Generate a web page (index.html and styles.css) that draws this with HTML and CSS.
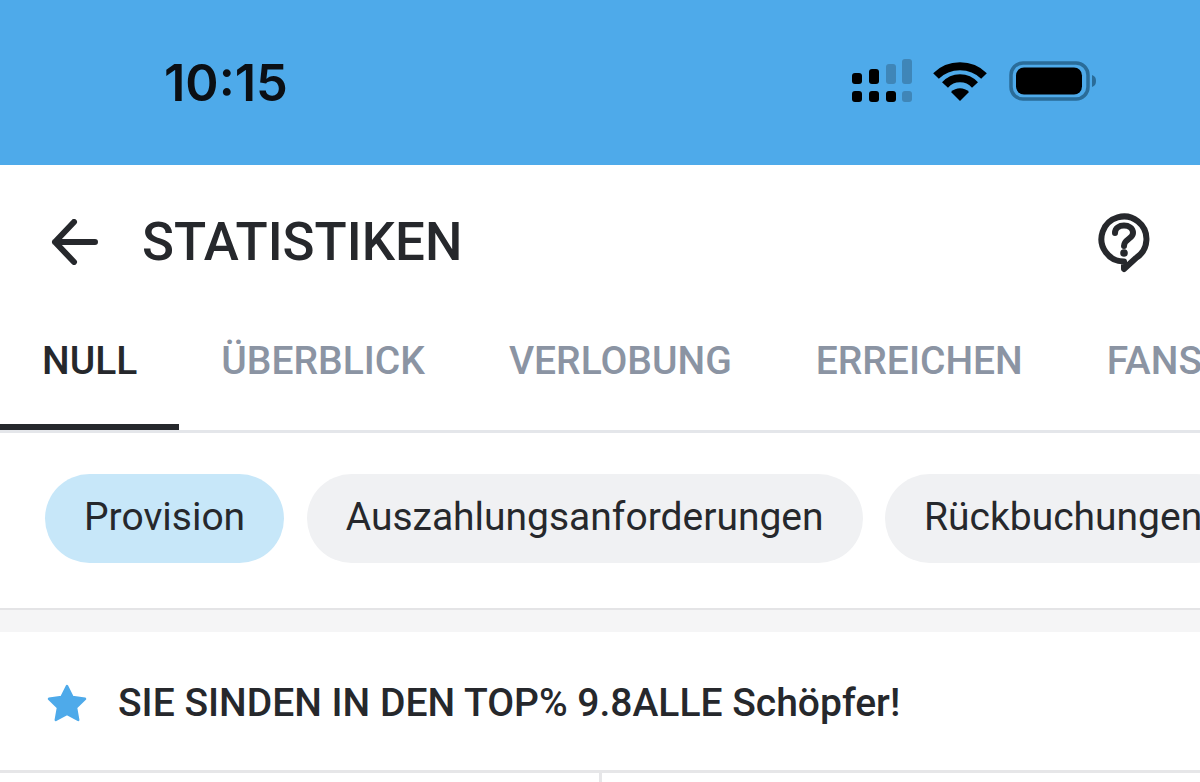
FILE: index.html
```
<!DOCTYPE html>
<html lang="de">
<head>
  <meta charset="UTF-8" />
  <title>Statistiken</title>
  <link rel="stylesheet" href="styles.css">
</head>
<body>

  <!-- Statusleiste -->
  <div class="statusbar">
    <span class="time">10:15</span>
    <div class="status-icons">
      <svg class="signal" width="62" height="44" viewBox="0 0 62 44">
        <rect x="1" y="14" width="10" height="11" rx="3" fill="#000"/>
        <rect x="1" y="32" width="10" height="11" rx="3" fill="#000"/>
        <rect x="18" y="10" width="10" height="15" rx="3" fill="#000"/>
        <rect x="18" y="32" width="10" height="11" rx="3" fill="#000"/>
        <rect x="35" y="5" width="10" height="20" rx="3" fill="#3f86b8"/>
        <rect x="35" y="32" width="10" height="11" rx="3" fill="#000"/>
        <rect x="51" y="0" width="10" height="25" rx="3" fill="#3f86b8"/>
        <rect x="51" y="32" width="10" height="11" rx="3" fill="#3f86b8"/>
      </svg>
      <svg class="wifi" width="54" height="40" viewBox="0 0 54 40">
        <path d="M3 15 C16 2 38 2 51 15" fill="none" stroke="#000" stroke-width="8"/>
        <path d="M12 24 C20 15 34 15 42 24" fill="none" stroke="#000" stroke-width="8"/>
        <path d="M18 31 C23 26 31 26 36 31 L27 40 Z" fill="#000"/>
      </svg>
      <svg class="battery" width="88" height="40" viewBox="0 0 88 40">
        <rect x="2" y="2" width="77" height="36" rx="12" fill="none" stroke="#2a6c99" stroke-width="3.5"/>
        <rect x="7" y="6.500" width="66" height="27" rx="8" fill="#000"/>
        <path d="M83 14 C86 15 87 17 87 20 C87 23 86 25 83 26 Z" fill="#2a6c99"/>
      </svg>
    </div>
  </div>

  <!-- Kopfzeile -->
  <header class="topbar">
    <svg class="back" width="50" height="46" viewBox="0 0 50 46">
      <path d="M5 23 H45 M24 3 L5 23 L24 43" fill="none" stroke="#26282c" stroke-width="6" stroke-linecap="round" stroke-linejoin="round"/>
    </svg>
    <h1>STATISTIKEN</h1>
    <svg class="help" width="52" height="60" viewBox="0 0 52 60">
      <path d="M26 56 L26 48.500 A22.500 22.500 0 1 1 38 45 Z" fill="none" stroke="#26282c" stroke-width="6" stroke-linejoin="round"/>
      <path d="M17 20 C17 10 35 10 35 20 C35 26 26 26 26 33" fill="none" stroke="#26282c" stroke-width="6" stroke-linecap="round"/>
      <circle cx="26" cy="40" r="3.800" fill="#26282c"/>
    </svg>
  </header>

  <!-- Tabs -->
  <nav class="tabs">
    <a class="tab active">NULL</a>
    <a class="tab">ÜBERBLICK</a>
    <a class="tab">VERLOBUNG</a>
    <a class="tab">ERREICHEN</a>
    <a class="tab">FANS</a>
  </nav>

  <!-- Filter -->
  <div class="chips">
    <span class="chip selected">Provision</span>
    <span class="chip">Auszahlungsanforderungen</span>
    <span class="chip">Rückbuchungen</span>
  </div>

  <div class="spacer"></div>

  <!-- Hinweis -->
  <div class="banner">
    <svg class="star" width="40" height="38" viewBox="0 0 40 38">
      <path d="M20 2 L25.5 13 L38 14.8 L29 23.5 L31.2 36 L20 30 L8.8 36 L11 23.5 L2 14.8 L14.5 13 Z" fill="#4eaaea" stroke="#4eaaea" stroke-width="2.5" stroke-linejoin="round"/>
    </svg>
    <span>SIE SINDEN IN DEN TOP% 9.8ALLE Schöpfer!</span>
  </div>

  <div class="stats">
    <div class="cell"></div>
    <div class="cell"></div>
  </div>

</body>
</html>
```

FILE: styles.css
```
html, body {
  height: 100%;
}

body {
  margin: 0;
  height: 782px;
  overflow: hidden;
  background: white;
  font-family: Roboto, sans-serif;
  color: #26282c;
}

.statusbar {
  height: 165px;
  background: #4eaaea;
  display: flex;
  align-items: center;
  justify-content: space-between;
  padding: 0 103px 0 164px;
  box-sizing: border-box;
}

.time {
  font-family: Inter, sans-serif;
  font-size: 50.500px;
  font-weight: 600;
  color: #0b0f14;
}

.status-icons {
  display: flex;
  align-items: center;
  gap: 21px;
  margin-bottom: 4px;
}

.signal {
  margin-right: -1px;
}

.battery {
  margin-left: 1px;
}

.topbar {
  height: 150px;
  display: flex;
  align-items: center;
  padding: 3px 50px 0 50px;
  box-sizing: border-box;
}

.topbar h1 {
  margin: 0 0 0 42px;
  flex: 1;
  font-size: 52.800px;
  font-weight: 500;
}

.help {
  margin-top: 3px;
}

.tabs {
  display: flex;
  height: 118px;
  box-sizing: border-box;
  border-bottom: 3px solid #e4e6ea;
  overflow: hidden;
}

.tab {
  flex: none;
  padding: 23px 42px 0;
  height: 115px;
  box-sizing: border-box;
  font-size: 39px;
  font-weight: 500;
  color: #8b94a3;
}

.tab.active {
  color: #26282c;
  border-bottom: 6px solid #26282c;
}

.chips {
  display: flex;
  gap: 22.500px;
  height: 175px;
  padding: 41px 0 0 45px;
  box-sizing: border-box;
  overflow: hidden;
}

.chip {
  flex: none;
  height: 89px;
  line-height: 87px;
  padding: 0 39px;
  border-radius: 45px;
  background: #f0f1f3;
  font-size: 39px;
}

.chip.selected {
  background: #c7e7f9;
}

.spacer {
  height: 22px;
  background: #f5f5f6;
  border-top: 2px solid #e4e4e6;
}

.banner {
  height: 138px;
  display: flex;
  align-items: center;
  gap: 31px;
  padding: 4px 0 0 47px;
  box-sizing: border-box;
  font-size: 39px;
  font-weight: 500;
}

.star {
  margin-top: -1px;
}

.stats {
  display: flex;
  height: 10px;
  border-top: 3px solid #e6e6e8;
}

.cell {
  flex: 1;
}

.cell + .cell {
  border-left: 3px solid #e6e6e8;
}
```
